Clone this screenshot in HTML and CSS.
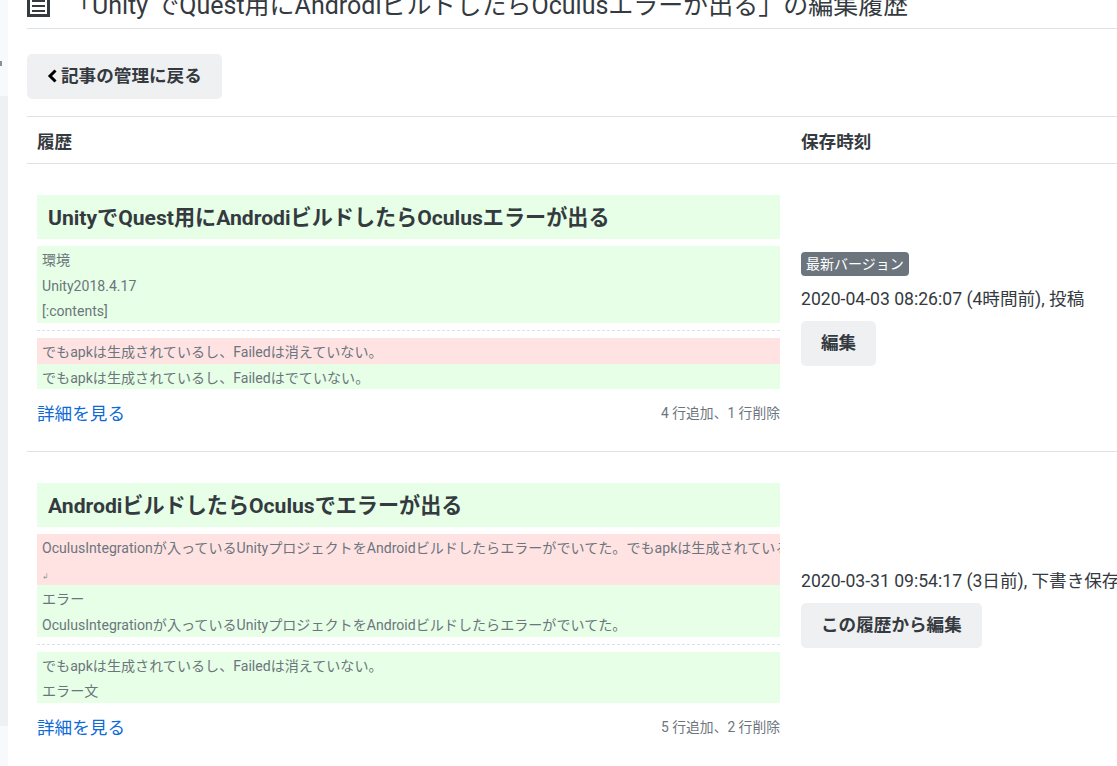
FILE: index.html
```html
<!DOCTYPE html>
<html lang="ja">
<head>
    <meta charset="UTF-8">
    <title>編集履歴</title>
    <link rel="stylesheet" href="styles.css">
</head>
<body>

<div class="layout">
    <!-- cut off side menu -->
    <aside class="side">
        <div class="side-top"><span class="side-mark"></span></div>
        <div class="side-mid"></div>
        <div class="side-end"></div>
    </aside>

    <main class="content">
        <h1 class="page-title">
            <svg class="title-icon" width="23" height="23" viewBox="0 0 23 23">
                <rect x="1.5" y="1.5" width="20" height="20" fill="none" stroke="#343a40" stroke-width="3"/>
                <rect x="5" y="11" width="13" height="2" fill="#343a40"/>
                <rect x="5" y="16" width="13" height="2" fill="#343a40"/>
                <rect x="5" y="6" width="13" height="2" fill="#343a40"/>
            </svg>
            <span>「Unity でQuest用にAndrodiビルドしたらOculusエラーが出る」の編集履歴</span>
        </h1>

        <div class="back-area">
            <a class="btn" href="#">
                <svg class="back-icon" width="11" height="14" viewBox="0 0 11 14">
                    <path d="M8.5 1.5 L3 7 L8.5 12.5" fill="none" stroke="#000" stroke-width="3"/>
                </svg>記事の管理に戻る</a>
        </div>

        <div class="history">
            <div class="history-head">
                <div class="col-main">履歴</div>
                <div class="col-side">保存時刻</div>
            </div>

            <div class="history-row">
                <div class="col-main">
                    <div class="diff-title">UnityでQuest用にAndrodiビルドしたらOculusエラーが出る</div>
                    <div class="diff-lines">
                        <div class="line add">環境</div>
                        <div class="line add">Unity2018.4.17</div>
                        <div class="line add">[:contents]</div>
                    </div>
                    <div class="diff-sep"></div>
                    <div class="diff-lines">
                        <div class="line del">でもapkは生成されているし、Failedは消えていない。</div>
                        <div class="line add">でもapkは生成されているし、Failedはでていない。</div>
                    </div>
                    <div class="diff-foot">
                        <a class="more" href="#">詳細を見る</a>
                        <span class="count">4 行追加、1 行削除</span>
                    </div>
                </div>
                <div class="col-side">
                    <div><span class="badge">最新バージョン</span></div>
                    <div class="saved-at">2020-04-03 08:26:07 (4時間前), 投稿</div>
                    <a class="btn" href="#">編集</a>
                </div>
            </div>

            <div class="history-row">
                <div class="col-main">
                    <div class="diff-title">AndrodiビルドしたらOculusでエラーが出る</div>
                    <div class="diff-lines">
                        <div class="line del">OculusIntegrationが入っているUnityプロジェクトをAndroidビルドしたらエラーがでいてた。でもapkは生成されている</div>
                        <div class="line del"><span class="return">↲</span></div>
                        <div class="line add">エラー</div>
                        <div class="line add">OculusIntegrationが入っているUnityプロジェクトをAndroidビルドしたらエラーがでいてた。</div>
                    </div>
                    <div class="diff-sep"></div>
                    <div class="diff-lines">
                        <div class="line add">でもapkは生成されているし、Failedは消えていない。</div>
                        <div class="line add">エラー文</div>
                    </div>
                    <div class="diff-foot">
                        <a class="more" href="#">詳細を見る</a>
                        <span class="count">5 行追加、2 行削除</span>
                    </div>
                </div>
                <div class="col-side col-side-low">
                    <div class="saved-at">2020-03-31 09:54:17 (3日前), 下書き保存</div>
                    <a class="btn" href="#">この履歴から編集</a>
                </div>
            </div>
        </div>
    </main>
</div>

</body>
</html>
```

FILE: styles.css
```css
html, body {
    height: 100%;
}
body {
    margin: 0;
    overflow: hidden;
    background-color: #fff;
    color: #343a40;
    font-family: Roboto, "Noto Sans CJK JP", sans-serif;
    font-size: 17.6px;
}
a {
    text-decoration: none;
}

.layout {
    display: flex;
    height: 766px;
}

/* side menu */
.side {
    width: 8px;
    flex: none;
    display: flex;
    flex-direction: column;
}
.side-top {
    height: 96px;
    background-color: #f8f9fa;
    padding-top: 61px;
    box-sizing: border-box;
}
.side-mark {
    display: block;
    width: 2px;
    height: 5px;
    background-color: #8b8f93;
}
.side-mid {
    flex: 1;
    background-color: #eff0f2;
}
.side-end {
    height: 40px;
    background-color: #f8f9fa;
}

.content {
    width: 1109px;
    flex: none;
    padding-left: 19px;
    box-sizing: border-box;
}

.page-title {
    display: flex;
    align-items: flex-end;
    gap: 17px;
    height: 28px;
    margin: 0;
    border-bottom: 1px solid #dee2e6;
    font-size: 25px;
    font-weight: 400;
    line-height: 25px;
    white-space: nowrap;
}
.page-title span {
    margin-bottom: 10px;
}
.title-icon {
    flex: none;
    margin-bottom: 11px;
}

.back-area {
    padding: 25px 0 17px;
}

.btn {
    display: inline-block;
    height: 45px;
    line-height: 45px;
    padding: 0 20px;
    background-color: #eff0f2;
    border-radius: 5px;
    color: #343a40;
    font-weight: 700;
    white-space: nowrap;
}
.back-icon {
    margin-right: 3px;
    vertical-align: -1px;
}

.history-head, .history-row {
    display: flex;
    border-top: 1px solid #dee2e6;
}
.history-head {
    height: 46px;
    align-items: center;
    font-weight: 700;
}
.history-row {
    height: 287px;
}
.col-main {
    width: 743px;
    flex: none;
    padding: 0 11px 0 10px;
}
.history-row .col-main {
    padding-top: 31px;
}
.col-side {
    padding-left: 10px;
    white-space: nowrap;
}
.history-row .col-side {
    display: flex;
    flex-direction: column;
    align-items: flex-start;
    justify-content: center;
}
.history-row .col-side-low {
    padding-top: 15px;
}

.diff-title {
    height: 44px;
    line-height: 46px;
    padding-left: 11px;
    background-color: #e6ffe6;
    font-size: 21.12px;
    font-weight: 700;
    margin-bottom: 7px;
}
.diff-lines {
    font-size: 14.08px;
    line-height: 29px;
    color: #6c757d;
}
.line {
    height: 25.7px;
    padding-left: 5px;
    white-space: nowrap;
    overflow: hidden;
}
.line.add {
    background-color: #e6ffe6;
}
.line.del {
    background-color: #ffe3e3;
}
.return {
    font-size: 8px;
    color: #9a9a9a;
}
.diff-sep {
    height: 0;
    margin: 7px 0;
    border-top: 1px dashed #dee2e6;
}

.diff-foot {
    display: flex;
    justify-content: space-between;
    align-items: center;
    margin-top: 10px;
    height: 26px;
}
.more {
    color: #0d6ad6;
}
.count {
    font-size: 13.8px;
    color: #6c757d;
}

.badge {
    display: inline-block;
    height: 24px;
    line-height: 25px;
    padding: 0 5px;
    background-color: #6c757d;
    border-radius: 4px;
    color: #fff;
    font-size: 14px;
    margin-top: 2px;
}
.saved-at {
    margin: 10px 0 9px;
    line-height: 26px;
}
```
